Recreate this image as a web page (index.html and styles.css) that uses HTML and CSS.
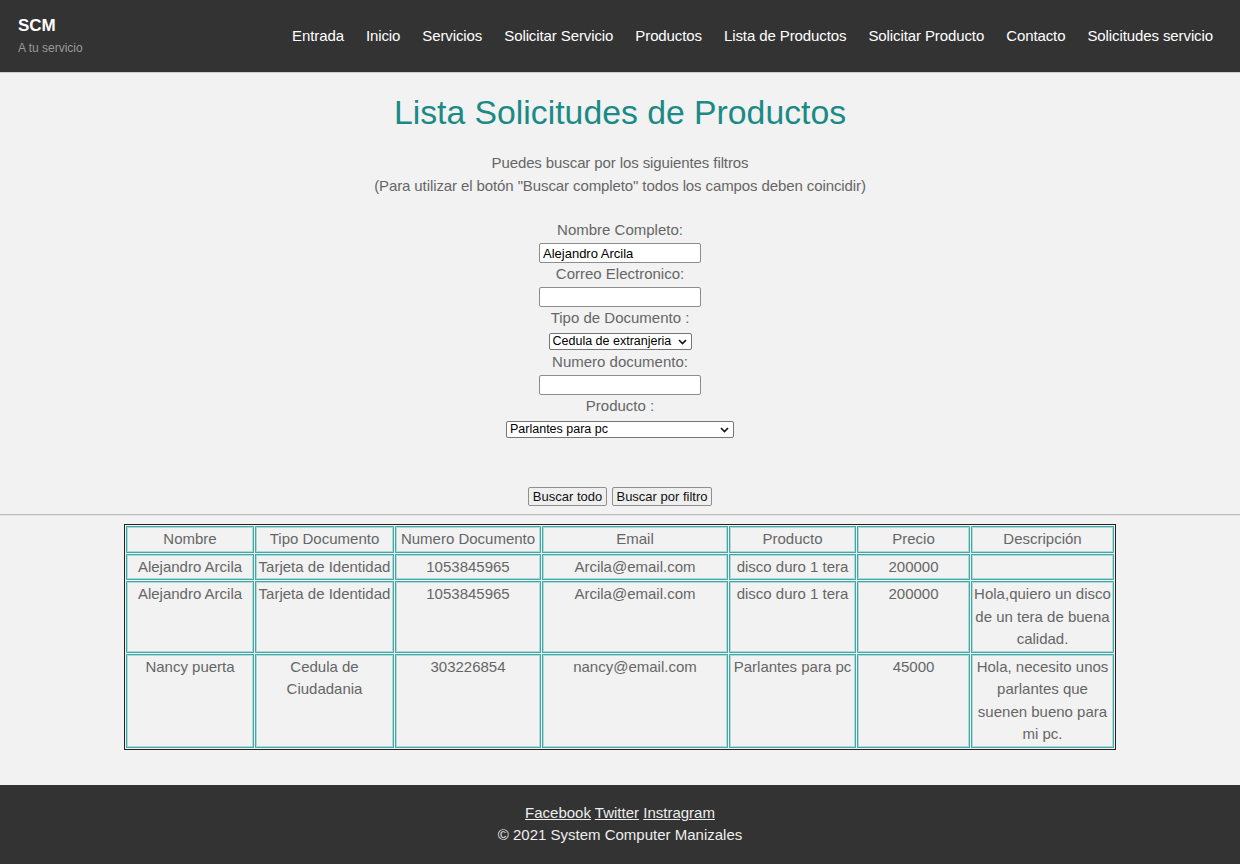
FILE: index.html
```html
<!DOCTYPE html>
<html lang="es">
<head>
<meta charset="utf-8">
<title>Lista Solicitudes de Productos</title>
<link rel="stylesheet" href="styles.css">
</head>
<body>
<header class="topbar">
  <div class="brand">
    <div class="brand-name">SCM</div>
    <div class="brand-tag">A tu servicio</div>
  </div>
  <nav class="nav">
    <a class="nav-link" href="#">Entrada</a>
    <a class="nav-link" href="#">Inicio</a>
    <a class="nav-link" href="#">Servicios</a>
    <a class="nav-link" href="#">Solicitar Servicio</a>
    <a class="nav-link" href="#">Productos</a>
    <a class="nav-link" href="#">Lista de Productos</a>
    <a class="nav-link" href="#">Solicitar Producto</a>
    <a class="nav-link" href="#">Contacto</a>
    <a class="nav-link" href="#">Solicitudes servicio</a>
  </nav>
</header>
<main class="content">
  <h1 class="title">Lista Solicitudes de Productos</h1>
  <p class="intro">Puedes buscar por los siguientes filtros<br>(Para utilizar el botón "Buscar completo" todos los campos deben coincidir)</p>
  <form class="filters">
    <label class="field-label" for="nombre">Nombre Completo:</label>
    <input class="text-input" id="nombre" type="text" value="Alejandro Arcila">
    <label class="field-label" for="correo">Correo Electronico:</label>
    <input class="text-input" id="correo" type="text">
    <label class="field-label" for="tipo">Tipo de Documento :</label>
    <span class="select-wrap">
      <select class="select select-doc" id="tipo">
        <option>Cedula de extranjeria</option>
      </select>
      <svg class="chevron" width="9" height="6" viewBox="0 0 9 6"><path d="M1 1 L4.5 4.5 L8 1" fill="none" stroke="#111" stroke-width="1.6"/></svg>
    </span>
    <label class="field-label" for="numero">Numero documento:</label>
    <input class="text-input" id="numero" type="text">
    <label class="field-label" for="producto">Producto :</label>
    <span class="select-wrap">
      <select class="select select-product" id="producto">
        <option>Parlantes para pc</option>
      </select>
      <svg class="chevron" width="9" height="6" viewBox="0 0 9 6"><path d="M1 1 L4.5 4.5 L8 1" fill="none" stroke="#111" stroke-width="1.6"/></svg>
    </span>
    <div class="actions">
      <button class="btn btn-all" type="button">Buscar todo</button>
      <button class="btn btn-filter" type="button">Buscar por filtro</button>
    </div>
  </form>
  <hr class="divider">
  <table class="requests">
    <thead>
      <tr>
        <th class="c1">Nombre</th>
        <th class="c2">Tipo Documento</th>
        <th class="c3">Numero Documento</th>
        <th class="c4">Email</th>
        <th class="c5">Producto</th>
        <th class="c6">Precio</th>
        <th class="c7">Descripción</th>
      </tr>
    </thead>
    <tbody>
      <tr>
        <td>Alejandro Arcila</td>
        <td>Tarjeta de Identidad</td>
        <td>1053845965</td>
        <td>Arcila@email.com</td>
        <td>disco duro 1 tera</td>
        <td>200000</td>
        <td></td>
      </tr>
      <tr>
        <td>Alejandro Arcila</td>
        <td>Tarjeta de Identidad</td>
        <td>1053845965</td>
        <td>Arcila@email.com</td>
        <td>disco duro 1 tera</td>
        <td>200000</td>
        <td>Hola,quiero un disco de un tera de buena calidad.</td>
      </tr>
      <tr>
        <td>Nancy puerta</td>
        <td>Cedula de Ciudadania</td>
        <td>303226854</td>
        <td>nancy@email.com</td>
        <td>Parlantes para pc</td>
        <td>45000</td>
        <td>Hola, necesito unos parlantes que suenen bueno para mi pc.</td>
      </tr>
    </tbody>
  </table>
</main>
<footer class="footer">
  <div class="social"><a class="social-link" href="#">Facebook</a> <a class="social-link" href="#">Twitter</a> <a class="social-link" href="#">Instragram</a></div>
  <div class="copy">© 2021 System Computer Manizales</div>
</footer>
</body>
</html>
```
FILE: styles.css
```css
body {
  margin: 0;
  font-family: "Liberation Sans", Arial, sans-serif;
  font-size: 15px;
  line-height: 1.5;
  color: #666;
  background: #f2f2f2;
}

.topbar {
  display: flex;
  justify-content: space-between;
  align-items: center;
  height: 72px;
  padding: 0 16px 0 18px;
  background: #333;
  border-bottom: 1px solid #cfcfcf;
}

.brand-name {
  font-size: 17px;
  font-weight: bold;
  line-height: 20px;
  color: #fff;
}

.brand-tag {
  margin-top: 3px;
  font-size: 12px;
  line-height: 18px;
  color: #999;
}

.nav {
  display: flex;
}

.nav-link {
  padding: 0 11px;
  color: #fff;
  text-decoration: none;
  font-size: 15px;
  letter-spacing: -0.1px;
}

.content {
  padding-bottom: 35px;
}

.title {
  margin: 20px 0 0;
  font-size: 33.75px;
  font-weight: normal;
  line-height: 39px;
  color: #1a8a86;
  text-align: center;
}

.intro {
  margin: 20px 0 0;
  text-align: center;
  line-height: 22.5px;
  letter-spacing: -0.1px;
}

.filters {
  display: flex;
  flex-direction: column;
  align-items: center;
  margin: 22px 0 0;
}

.field-label {
  display: block;
  line-height: 22px;
}

.text-input {
  box-sizing: border-box;
  width: 162px;
  height: 20px;
  margin: 2px 0 0;
  padding: 1px 3px;
  border: 1px solid #8d8d8d;
  border-radius: 2px;
  background: #fff;
  color: #000;
  font-family: "Liberation Sans", Arial, sans-serif;
  font-size: 13px;
}

.select-wrap {
  position: relative;
  display: block;
  margin: 4px 0 1px;
  height: 17px;
}

.select {
  display: block;
  box-sizing: border-box;
  height: 17px;
  margin: 0;
  padding: 0 14px 0 3px;
  border: 1px solid #767676;
  border-radius: 2px;
  background: #fff;
  color: #000;
  font-family: "Liberation Sans", Arial, sans-serif;
  font-size: 12.5px;
  line-height: 15px;
  -webkit-appearance: none;
  appearance: none;
}

.chevron {
  position: absolute;
  right: 5px;
  top: 6px;
  pointer-events: none;
}

.select-doc {
  width: 143px;
}

.select-product {
  width: 228px;
}

.actions {
  display: flex;
  justify-content: center;
  gap: 5px;
  margin-top: 48px;
}

.btn {
  box-sizing: border-box;
  height: 19px;
  padding: 0;
  border: 1px solid #8f8f8f;
  border-radius: 2px;
  background: #efefef;
  color: #111;
  font-family: "Liberation Sans", Arial, sans-serif;
  font-size: 13px;
  line-height: 15px;
  white-space: nowrap;
}

.btn-all {
  width: 79px;
}

.btn-filter {
  width: 100px;
}

.divider {
  height: 0;
  margin: 8px 0;
  border: 0;
  border-top: 1px solid #bdbdbd;
  border-bottom: 1px solid #e2e2e2;
}

.requests {
  width: 992px;
  margin: 0 auto;
  table-layout: fixed;
  border: 1px solid #222;
  border-spacing: 1px;
}

.requests th,
.requests td {
  padding: 1px;
  border: 1px solid #46a8a6;
  box-shadow: inset 0 0 0 1px #a9dbd9;
  font-weight: normal;
  text-align: center;
  vertical-align: top;
  line-height: 22.5px;
}

.c1 { width: 124px; }
.c2 { width: 135px; }
.c3 { width: 142px; }
.c4 { width: 182px; }
.c5 { width: 123px; }
.c6 { width: 109px; }
.c7 { width: 139px; }

.footer {
  padding: 17px 0;
  background: #333;
  color: #eee;
  text-align: center;
  line-height: 22.5px;
}

.social-link {
  color: #eee;
  text-decoration: underline;
}
```
